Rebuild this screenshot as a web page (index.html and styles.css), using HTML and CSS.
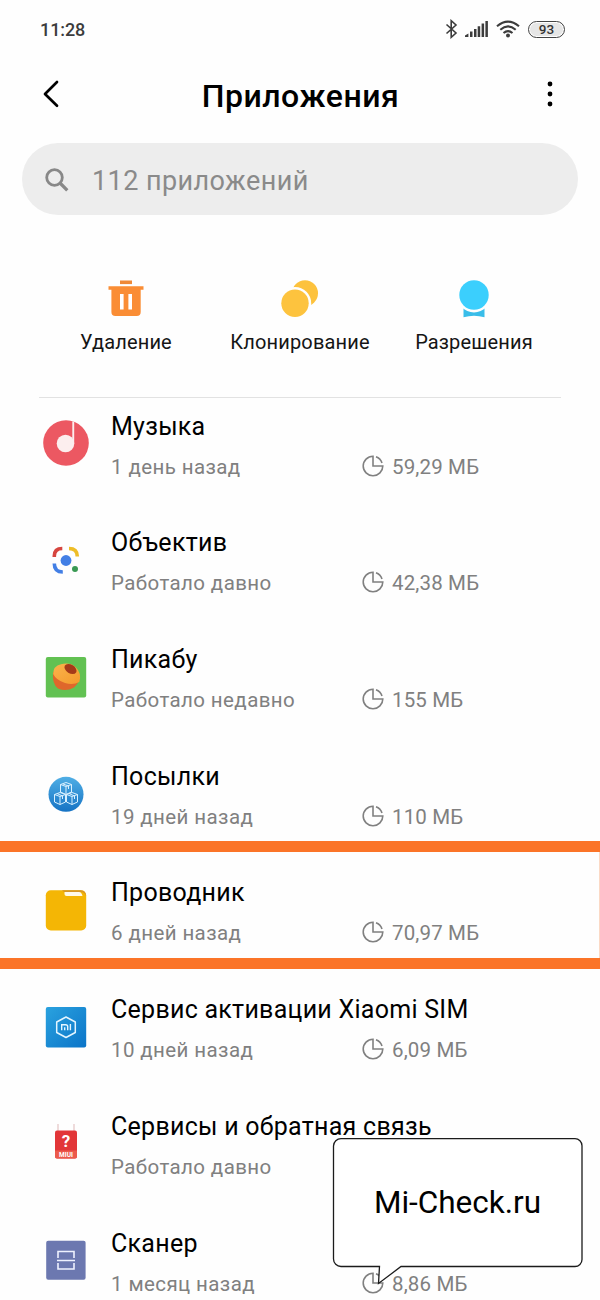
FILE: index.html
```html
<!DOCTYPE html>
<html lang="ru">
<head>
<meta charset="utf-8">
<title>Приложения</title>
<link rel="stylesheet" href="styles.css">
</head>
<body>
<svg class="defs" aria-hidden="true">
  <defs>
    <symbol id="pie" viewBox="0 0 22 22">
      <path d="M11 1.2A9.8 9.8 0 1 0 20.8 11H11Z" fill="none" stroke="currentColor" stroke-width="1.6"/>
      <path d="M14 1.700A9.8 9.8 0 0 1 20 8" fill="none" stroke="currentColor" stroke-width="1.6"/>
    </symbol>
    <linearGradient id="blue" x1="0" y1="0" x2="0" y2="1"><stop stop-color="#4faee5"/><stop offset="1" stop-color="#1673c4"/></linearGradient>
    <linearGradient id="sim" x1="0" y1="0" x2="1" y2="1"><stop stop-color="#2aa2df"/><stop offset="1" stop-color="#0b74c8"/></linearGradient>
    <linearGradient id="bun" x1="0" y1="0" x2="1" y2="1"><stop stop-color="#fbb34c"/><stop offset="1" stop-color="#f39a2c"/></linearGradient>
  </defs>
</svg>
<main class="screen">
  <div class="status">
    <span class="clock">11:28</span>
    <div class="indicators">
      <svg class="bt" viewBox="0 0 13 20"><path d="M1.5 5.5 11 14 6.2 18.3V1.7L11 6 1.5 14.5" fill="none" stroke="#3c3c3c" stroke-width="1.6"/></svg>
      <svg class="signal" viewBox="0 0 24 18"><path d="M0 15.5 3.4 13.5V17H0ZM5 11.5h2.5V17H5ZM9 9h2.5v8H9ZM12.7 6.2h2.5V17h-2.5ZM16.6 3.5h2.5V17h-2.5ZM20.4 1h2.5v16h-2.5Z" fill="#3c3c3c"/></svg>
      <svg class="wifi" viewBox="0 0 24 18"><g fill="none" stroke="#3c3c3c" stroke-width="2.1"><path d="M1 6.2Q12-3 23 6.2"/><path d="M4.3 9.7Q12 3.1 19.7 9.7"/><path d="M7.5 13Q12 9.2 16.5 13"/></g><circle cx="12" cy="15.6" r="2" fill="#3c3c3c"/></svg>
      <span class="battery">93</span>
    </div>
  </div>
  <header class="bar">
    <svg class="back" viewBox="0 0 18 28"><path d="M15 2 3 14 15 25.7" fill="none" stroke="#000" stroke-width="2.7" stroke-linecap="round" stroke-linejoin="round"/></svg>
    <h1 class="heading">Приложения</h1>
    <svg class="more" viewBox="0 0 6 28"><circle cx="3" cy="4" r="2.4"/><circle cx="3" cy="14" r="2.4"/><circle cx="3" cy="24" r="2.4"/></svg>
  </header>
  <div class="search">
    <svg class="lens" viewBox="0 0 24 24"><circle cx="9.5" cy="9.5" r="7.8" fill="none" stroke="#888" stroke-width="2.8"/><path d="m15 15 7.3 7.3" stroke="#888" stroke-width="3.3"/></svg>
    <span class="query">112 приложений</span>
  </div>
  <nav class="actions">
    <div class="action"><svg class="action-icon" viewBox="0 0 40 40"><path d="M14 .5h12v3.600H14Z" fill="#ef8937"/><path d="M2.500 6.200h35v3.600h-2.800V32q0 4-4 4H9.400q-4 0-4-4V9.800H2.500Z" fill="#fa8d35"/><path d="M14 14h3.600v15.600H14ZM22.400 14h3.600v15.600h-3.600Z" fill="#fff"/></svg><span class="action-label">Удаление</span></div>
    <div class="action"><svg class="action-icon" viewBox="0 0 40 40"><circle cx="25" cy="13.200" r="13" fill="#fdc23d"/><circle cx="15" cy="23.200" r="16.200" fill="#fefefe"/><circle cx="15" cy="23.200" r="13.700" fill="#fdc33e"/></svg><span class="action-label">Клонирование</span></div>
    <div class="action"><svg class="action-icon" viewBox="0 0 40 40"><path d="M9.500 28H30.500V37.300Q20 34 9.500 37.300Z" fill="#39bde9"/><circle cx="20" cy="15" r="17.400" fill="#fefefe"/><circle cx="20" cy="15" r="14.700" fill="#3bcffd"/></svg><span class="action-label">Разрешения</span></div>
  </nav>
  <section class="apps">
    <article class="app">
      <svg class="icon" viewBox="0 0 46 46"><circle cx="23" cy="23" r="22.800" fill="#ec5862"/><circle cx="22.500" cy="23.500" r="8.800" fill="#fceeee"/><path d="M29.300 1.500h1.900V23.500h-1.900Z" fill="#fceeee"/></svg>
      <h2 class="name">Музыка</h2><span class="used">1 день назад</span><span class="size"><svg class="pie"><use href="#pie"/></svg>59,29 МБ</span>
    </article>
    <article class="app">
      <svg class="icon" viewBox="0 0 46 46"><g fill="none" stroke-width="3.600"><path d="M11.300 20v-1q0-7.500 8-7.500" stroke="#d6453f"/><path d="M26 11.500q8.300 0 8.300 8" stroke="#eebd27"/><path d="M11.300 26.500q0 8.500 8.500 8.500" stroke="#437fe5"/></g><circle cx="23" cy="23.500" r="5.400" fill="#437fe5"/><circle cx="32" cy="32" r="3" fill="#399953"/></svg>
      <h2 class="name">Объектив</h2><span class="used">Работало давно</span><span class="size"><svg class="pie"><use href="#pie"/></svg>42,38 МБ</span>
    </article>
    <article class="app">
      <svg class="icon" viewBox="0 0 46 46"><rect x="2.800" y="3" width="40.400" height="40.400" rx="2" fill="#62c152"/><path d="M10 18Q9 30 15 34.500 23 38 31 33.500 35 30 36 26Z" fill="#df672b"/><path d="M10.200 20Q10 12 18 10.200 27 8 32.500 13 39 19 36.300 28 30 31.500 22 29 13 26 10.200 20Z" fill="url(#bun)"/><ellipse cx="27.500" cy="15" rx="6.600" ry="4.300" transform="rotate(32 27.500 15)" fill="#a43a19"/></svg>
      <h2 class="name">Пикабу</h2><span class="used">Работало недавно</span><span class="size"><svg class="pie"><use href="#pie"/></svg>155 МБ</span>
    </article>
    <article class="app">
      <svg class="icon" viewBox="0 0 46 46"><circle cx="23" cy="23.300" r="17.500" fill="url(#blue)"/><g fill="none" stroke="#d9f0ff" stroke-width="1"><path d="m17.500 13.500 5.500-2 5.500 2v7.500l-5.500 2.500-5.500-2.500Zm0 0 5.500 2 5.500-2m-5.500 2v8m-3-10.500 5.500 2v3"/><path d="m11.500 23.500 5.500-2 5.500 2v7.500l-5.500 2.500-5.500-2.500Zm0 0 5.500 2 5.500-2m-5.500 2v8m-3-11 5.500 2.500v3M23.500 23.500l5.500-2 5.500 2v7.500l-5.500 2.500-5.500-2.500Zm0 0 5.500 2 5.500-2m-5.500 2v8m-3-11 5.500 2.500v3"/></g></svg>
      <h2 class="name">Посылки</h2><span class="used">19 дней назад</span><span class="size"><svg class="pie"><use href="#pie"/></svg>110 МБ</span>
    </article>
    <article class="app marked">
      <svg class="icon" viewBox="0 0 46 46"><rect x="2.800" y="3.200" width="40.400" height="40.200" rx="5" fill="#f4b605"/><path d="M19 3.200h18.500q5.500 0 5.500 6-1-3.500-4.500-4.200H21Z" fill="#d69625"/><path d="M21.500 5H36q2.500.2 3.500 4H23.500q-2 0-2-2Z" fill="#fff9e9"/></svg>
      <h2 class="name">Проводник</h2><span class="used">6 дней назад</span><span class="size"><svg class="pie"><use href="#pie"/></svg>70,97 МБ</span>
    </article>
    <article class="app">
      <svg class="icon" viewBox="0 0 46 46"><rect x="2.800" y="3" width="40.400" height="40.400" rx="2" fill="url(#sim)"/><path d="m23 13 9.300 5v10.500l-9.300 5-9.300-5V18Z" fill="none" stroke="#e4f5ff" stroke-width="1.500" stroke-linejoin="round"/><path d="M18.700 26.200v-5.500h4q2 0 2 2v3.500m-3-3v3m5.700-6.200v6.200" fill="none" stroke="#e4f5ff" stroke-width="1.400"/></svg>
      <h2 class="name">Сервис активации Xiaomi SIM</h2><span class="used">10 дней назад</span><span class="size"><svg class="pie"><use href="#pie"/></svg>6,09 МБ</span>
    </article>
    <article class="app">
      <svg class="icon" viewBox="0 0 46 46"><path d="M15 3v8M31 3v8" stroke="#dfb8b8" stroke-width="1"/><rect x="12" y="9.500" width="22" height="28" rx="2" fill="#e23638"/><path d="M12 29.500h22v6q0 2-2 2H14q-2 0-2-2Z" fill="#ec5a4c"/><text x="23" y="26" class="question">?</text><text x="23" y="36" class="miui">MIUI</text></svg>
      <h2 class="name">Сервисы и обратная связь</h2><span class="used">Работало давно</span>
    </article>
    <article class="app">
      <svg class="icon" viewBox="0 0 46 46"><rect x="3.200" y="3.700" width="39.400" height="39" rx="2" fill="#6c78b0"/><path d="M15 21v-6.500h16V21M14 23.500h18M15 26v6h16v-6" fill="none" stroke="#eff2ff" stroke-width="1.600"/></svg>
      <h2 class="name">Сканер</h2><span class="used">1 месяц назад</span><span class="size"><svg class="pie"><use href="#pie"/></svg>8,86 МБ</span>
    </article>
  </section>
  <aside class="callout">
    <svg class="bubble" viewBox="0 0 252 150"><path d="M9 1.700H243a7 7 0 0 1 7 7V122.500a7 7 0 0 1-7 7H69L46.500 146.500 47.500 129.500H9a7.500 7.500 0 0 1-7.500-7.500V9A7.500 7.500 0 0 1 9 1.700Z" fill="#fff" stroke="#1b1b1b" stroke-width="1.300"/></svg>
    <span class="site">Mi-Check.ru</span>
  </aside>
</main>
</body>
</html>
```
FILE: styles.css
```css
*, *::after { box-sizing: border-box; }
body { margin: 0; background: #fefefe; font-family: Roboto, "Liberation Sans", sans-serif; color: #000; }
svg { display: block; flex: none; }
.defs { position: absolute; width: 0; height: 0; }
.screen { position: relative; width: 600px; height: 1300px; overflow: hidden; }
.status { display: flex; justify-content: space-between; align-items: center; height: 58px; padding: 0 35px 0 40px; }
.clock { font-size: 18px; font-weight: 500; color: #3c3c3c; letter-spacing: -.1px; }
.indicators { display: flex; align-items: center; }
.bt { width: 13px; height: 20px; margin-right: 7px; }
.signal { width: 24px; height: 18px; margin-right: 7px; }
.wifi { width: 24px; height: 18px; margin-right: 8px; }
.battery { width: 37px; height: 17px; border: 1.500px solid #444; border-radius: 9px; box-shadow: inset 0 0 0 1px #fff; background: #e6e6e6; font-size: 13.500px; font-weight: 500; line-height: 15px; text-align: center; color: #333; }
.bar { display: flex; justify-content: space-between; align-items: center; height: 72px; padding: 0 47px 0 42px; }
.back { width: 18px; height: 28px; }
.heading { margin: 4px 6px 0 0; font-size: 32px; font-weight: 500; line-height: 40px; letter-spacing: .5px; }
.more { width: 6px; height: 28px; }
.search { display: flex; align-items: center; height: 72px; margin: 13px 22px 0; padding-left: 22px; border-radius: 36px; background: #ededed; }
.lens { width: 24px; height: 24px; margin: 2px 23px 0 1px; }
.query { font-size: 27px; letter-spacing: .42px; color: #8a8a8a; line-height: 36px; margin-top: 3px; }
.actions { display: grid; grid-template-columns: repeat(3, 174px); height: 183px; margin: 0 39px; padding-top: 65px; border-bottom: 1px solid #e2e2e2; }
.action { display: flex; flex-direction: column; align-items: center; }
.action-icon { width: 40px; height: 40px; }
.action-label { margin-top: 9px; font-size: 20px; line-height: 26px; letter-spacing: .15px; color: #151515; white-space: nowrap; }
.apps { display: grid; grid-auto-rows: 116.700px; }
.app { position: relative; display: grid; grid-template-columns: 46px 252px 1fr; grid-template-rows: 32px 26px; column-gap: 0; row-gap: 11px; padding: 12.700px 0 0 43px; }
.icon { grid-row: 1 / 3; width: 46px; height: 46px; margin-top: 9.800px; }
.name { grid-column: 2 / 4; margin: 0 0 0 22px; font-size: 25px; font-weight: 400; line-height: 32px; letter-spacing: .27px; white-space: nowrap; }
.used { margin-left: 22px; font-size: 20.500px; line-height: 26px; letter-spacing: .4px; color: #808080; white-space: nowrap; }
.size { display: flex; align-items: center; gap: 8px; margin-left: 21px; font-size: 20.500px; line-height: 26px; letter-spacing: .15px; color: #808080; white-space: nowrap; }
.pie { width: 22px; height: 22px; margin-top: -2px; }
.marked::after { content: ""; position: absolute; left: 0; right: 0; top: -23.500px; height: 128px; border: solid #fb7428; border-width: 11px 0; box-shadow: inset -1px 0 #fbd9c5; }
.question { font: 700 17px Roboto, sans-serif; fill: #fff; text-anchor: middle; }
.miui { font: 700 6.500px Roboto, sans-serif; fill: #fff; text-anchor: middle; }
.callout { position: absolute; left: 332px; top: 1137px; width: 252px; height: 150px; }
.bubble { width: 252px; height: 150px; }
.site { position: absolute; left: 0; top: 46px; width: 251px; text-align: center; font-size: 31.500px; line-height: 40px; white-space: nowrap; }
```
